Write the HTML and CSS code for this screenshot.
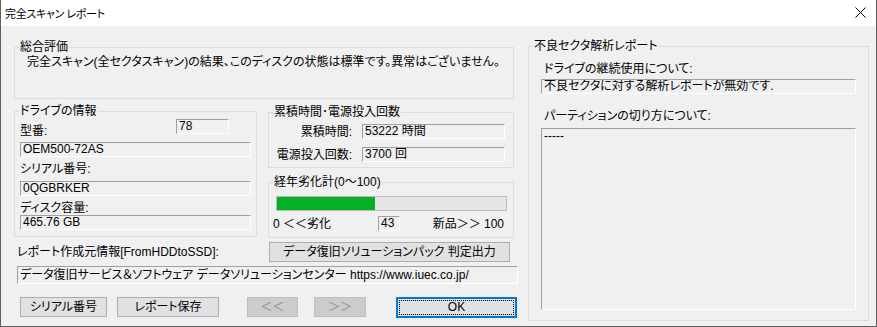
FILE: index.html
```html
<!DOCTYPE html>
<html lang="ja">
<head>
<meta charset="utf-8">
<title>完全スキャン レポート</title>
<link rel="stylesheet" href="styles.css">
</head>
<body>
<div class="window">
  <div class="titlebar">
    <span class="title">完全スキャン レポート</span>
    <svg class="close" width="11" height="11" viewBox="0 0 11 11"><path d="M0.5 0.5 L10.5 10.5 M10.5 0.5 L0.5 10.5" stroke="#000" stroke-width="1" fill="none"/></svg>
  </div>
  <div class="client">
    <div class="leftcol">
      <fieldset class="g g-summary">
        <legend>総合評価</legend>
        <p class="summary-text">完全スキャン(全セクタスキャン)の結果、このディスクの状態は標準です。異常はございません。</p>
      </fieldset>
      <div class="row2">
        <fieldset class="g g-drive">
          <legend>ドライブの情報</legend>
          <div class="model-row">
            <span class="lbl lbl-model">型番:</span>
            <div class="tb tb-78">78</div>
          </div>
          <div class="tb tb-wide tb-oem">OEM500-72AS</div>
          <div class="lbl lbl-serial">シリアル番号:</div>
          <div class="tb tb-wide tb-serial">0QGBRKER</div>
          <div class="lbl lbl-cap">ディスク容量:</div>
          <div class="tb tb-wide">465.76 GB</div>
        </fieldset>
        <div class="midcol">
          <fieldset class="g g-hours">
            <legend>累積時間･電源投入回数</legend>
            <div class="hours-grid">
              <span class="lbl hl">累積時間:</span>
              <div class="tb tb-hours">53222 時間</div>
              <span class="lbl hl">電源投入回数:</span>
              <div class="tb tb-hours">3700 回</div>
            </div>
          </fieldset>
          <fieldset class="g g-wear">
            <legend>経年劣化計(0～100)</legend>
            <div class="progress"><div class="fill" style="width:43%"></div></div>
            <div class="wear-row">
              <span class="lbl fw wear-old">0 ＜＜劣化</span>
              <div class="tb tb-43">43</div>
              <span class="lbl fw wear-new">新品＞＞ 100</span>
            </div>
          </fieldset>
        </div>
      </div>
      <div class="source-row">
        <span class="lbl">レポート作成元情報[FromHDDtoSSD]:</span>
        <button class="btn btn-pack">データ復旧ソリューションパック 判定出力</button>
      </div>
      <div class="tb tb-source">データ復旧サービス＆ソフトウェア データソリューションセンター https://www.iuec.co.jp/</div>
      <div class="buttons">
        <button class="btn btn-serial">シリアル番号</button>
        <button class="btn btn-save">レポート保存</button>
        <button class="btn btn-prev fw" disabled>＜＜</button>
        <button class="btn btn-next fw" disabled>＞＞</button>
        <button class="btn btn-ok"><span class="focus">OK</span></button>
      </div>
    </div>
    <fieldset class="g g-bad">
      <legend>不良セクタ解析レポート</legend>
      <div class="lbl bad-lbl1">ドライブの継続使用について:</div>
      <div class="tb tb-bad">不良セクタに対する解析レポートが無効です.</div>
      <div class="lbl bad-lbl2">パーティションの切り方について:</div>
      <div class="tb tb-area">-----</div>
    </fieldset>
  </div>
</div>
</body>
</html>
```
FILE: styles.css
```css
* { box-sizing: border-box; }
html, body { margin: 0; padding: 0; }
body {
  width: 877px;
  height: 327px;
  overflow: hidden;
  background: #ffffff;
  font-family: "Liberation Sans", "Noto Sans CJK JP", sans-serif;
  font-size: 12px;
  line-height: 14px;
  color: #000;
  font-feature-settings: "palt";
}
.window {
  width: 877px;
  height: 327px;
  border: 1px solid #5f5f5f;
  border-top: none;
  background: #f0f0f0;
  display: flex;
  flex-direction: column;
}
.titlebar {
  height: 26px;
  background: #ffffff;
  display: flex;
  align-items: center;
  padding-left: 4px;
  padding-right: 10px;
  flex: none;
}
.title {
  font-family: "Noto Sans CJK JP", sans-serif;
  font-size: 11px;
  letter-spacing: -0.3px;
  flex: 1;
}
.close { display: block; margin-top: -1px; }

.client {
  flex: 1;
  display: flex;
  align-items: flex-start;
  padding: 14px 0 0 13px;
}
.leftcol {
  width: 504px;
  display: flex;
  flex-direction: column;
}

/* group boxes */
.g {
  margin: 0;
  padding: 0;
  border: 1px solid #dcdcdc;
  min-width: 0;
}
.g legend {
  padding: 0 1px;
  margin-left: 4px;
  line-height: 14px;
  height: 14px;
}

.lbl { white-space: nowrap; }
.fw { font-feature-settings: normal; }

/* static edit boxes */
.tb {
  border: 1px solid;
  border-color: #a0a0a0 #ffffff #ffffff #a0a0a0;
  background: #f0f0f0;
  height: 15px;
  line-height: 13px;
  padding-left: 2px;
  white-space: nowrap;
  overflow: hidden;
}

.g-summary {
  width: 500px;
  height: 59px;
}
.summary-text {
  margin: 1px 0 0 0;
  padding-left: 12px;
}

.row2 {
  display: flex;
  margin-top: 5px;
  align-items: flex-start;
}
.g-drive {
  width: 243px;
  height: 133px;
  padding: 0 6px 0 5px;
}
.g-drive legend { margin-left: -1px; }
.model-row {
  display: flex;
  align-items: flex-start;
  height: 21px;
}
.lbl-model { margin-top: 6px; }
.tb-78 { width: 53px; margin-left: auto; margin-right: 21px; margin-top: 1px; }
.tb-wide { width: 231px; }
.tb-oem { margin-top: 3px; }
.lbl-serial { margin-top: 5px; }
.tb-serial { margin-top: 5px; }
.lbl-cap { margin-top: 5px; }

.midcol {
  margin-left: 11px;
  width: 246px;
  display: flex;
  flex-direction: column;
}
.g-hours {
  height: 63px;
  margin-top: 1px;
}
.hours-grid {
  display: grid;
  grid-template-columns: 82px 143px;
  column-gap: 10px;
  row-gap: 8px;
  margin: 5px 0 0 1px;
  align-items: center;
}
.hl { text-align: right; }
.g-wear {
  height: 63px;
  margin-top: 7px;
}
.progress {
  width: 231px;
  height: 15px;
  margin: 7px 0 0 7px;
  background: #e6e6e6;
  border: 1px solid #bcbcbc;
}
.fill { height: 100%; background: #06b025; }
.wear-row {
  display: flex;
  align-items: center;
  margin-top: 5px;
  padding: 0 9px 0 4px;
}
.wear-old { width: 105px; flex: none; }
.tb-43 { width: 22px; flex: none; }
.wear-new { margin-left: auto; }

.source-row {
  display: flex;
  align-items: center;
  margin-top: 4px;
  padding-left: 3px;
  height: 20px;
}
.source-row .lbl { width: 252px; }

.btn {
  font: inherit;
  font-feature-settings: "palt";
  color: #000;
  background: #e1e1e1;
  border: 1px solid #adadad;
  height: 20px;
  padding: 0;
  line-height: 14px;
  margin: 0;
}
.btn.fw { font-feature-settings: normal; }
.btn:disabled {
  background: #cccccc;
  border-color: #bfbfbf;
  color: #8d8d8d;
}
.btn-pack { width: 241px; }

.tb-source {
  margin-top: 4px;
  margin-left: 3px;
  width: 501px;
  height: 18px;
  line-height: 16px;
}

.buttons {
  display: flex;
  margin-top: 13px;
  padding-left: 6px;
}
.btn-serial { width: 87px; }
.btn-save { width: 102px; margin-left: 10px; }
.btn-prev { width: 51px; margin-left: 28px; }
.btn-next { width: 52px; margin-left: 16px; }
.btn-ok {
  width: 121px;
  margin-left: 30px;
  height: 21px;
  border: 2px solid #0078d7;
  padding: 1px;
}
.btn-ok .focus {
  display: block;
  height: 100%;
  border: 1px dotted #000;
  line-height: 13px;
}

/* right group */
.g-bad {
  width: 341px;
  height: 282px;
  margin: -1px 0 0 10px;
  padding: 0 0 0 12px;
}
.g-bad legend { margin-left: -8px; }
.bad-lbl1 { margin: 9px 0 0 3px; }
.tb-bad { width: 315px; margin-top: 3px; }
.bad-lbl2 { margin: 15px 0 0 3px; }
.tb-area {
  width: 315px;
  height: 182px;
  margin-top: 5px;
  padding-top: 1px;
}
```
